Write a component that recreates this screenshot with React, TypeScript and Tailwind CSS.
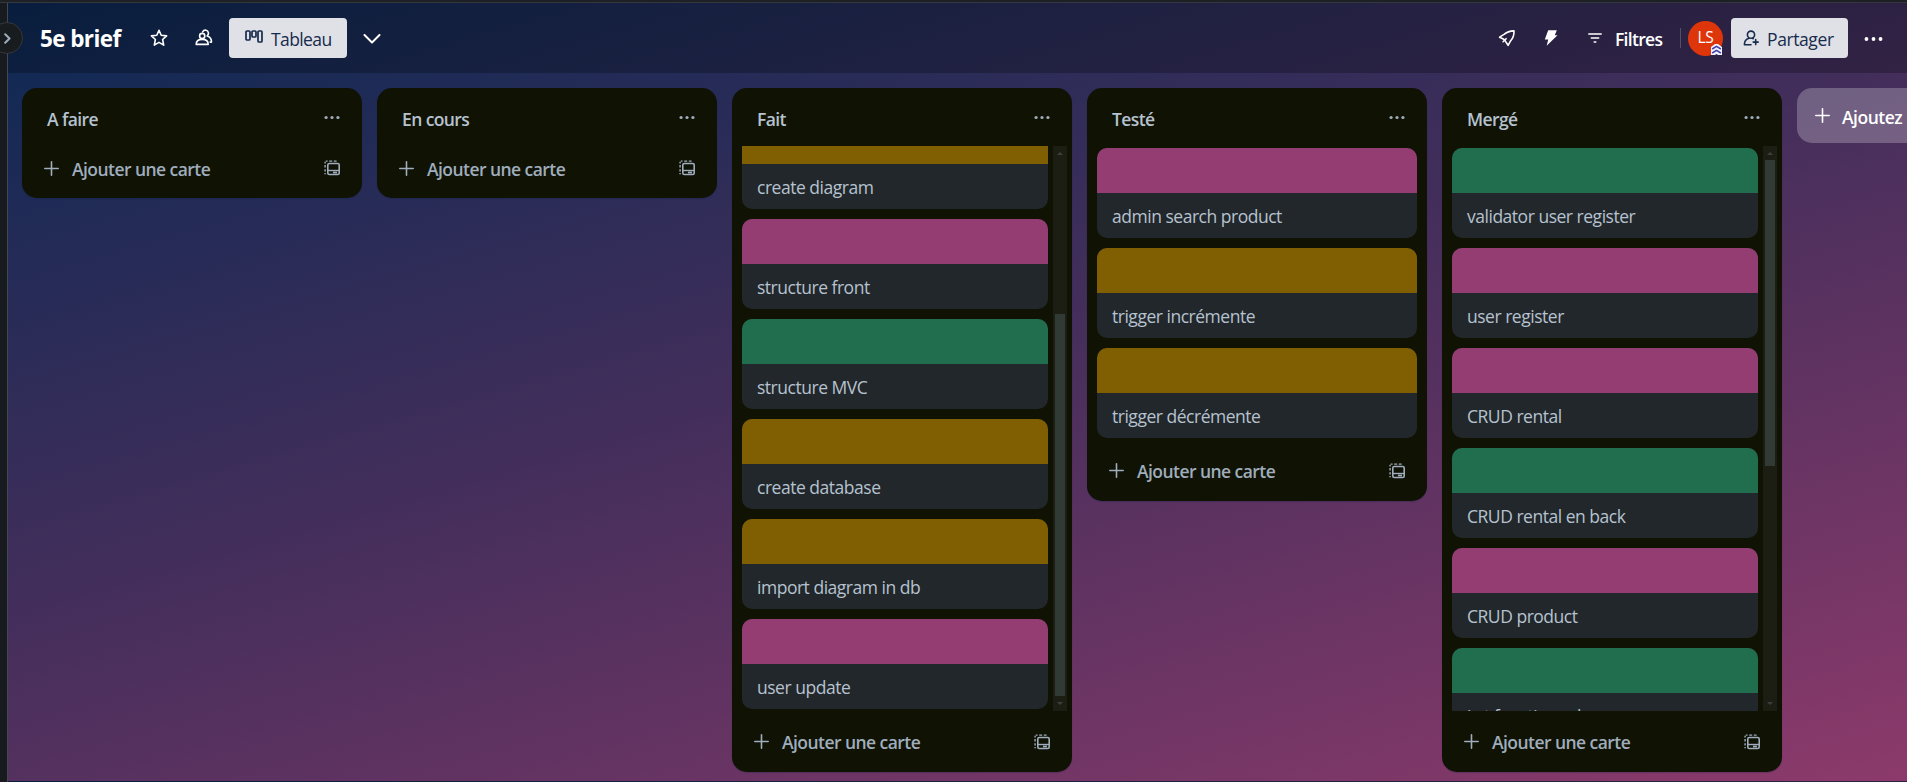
import React from "react";

type Tint = "yellow" | "pink" | "green";
type CardData = { title: string; tint: Tint };
type ListData = {
  title: string;
  cards: CardData[];
  scroll?: { offset: string; thumb: string };
};

const tints: Record<Tint, string> = {
  yellow: "bg-[#7f5f01]",
  pink: "bg-[#943d73]",
  green: "bg-[#216e4e]",
};

const lists: ListData[] = [
  { title: "A faire", cards: [] },
  { title: "En cours", cards: [] },
  {
    title: "Fait",
    scroll: { offset: "-mt-[27px]", thumb: "mt-[168px] h-[382px]" },
    cards: [
      { title: "create diagram", tint: "yellow" },
      { title: "structure front", tint: "pink" },
      { title: "structure MVC", tint: "green" },
      { title: "create database", tint: "yellow" },
      { title: "import diagram in db", tint: "yellow" },
      { title: "user update", tint: "pink" },
    ],
  },
  {
    title: "Testé",
    cards: [
      { title: "admin search product", tint: "pink" },
      { title: "trigger incrémente", tint: "yellow" },
      { title: "trigger décrémente", tint: "yellow" },
    ],
  },
  {
    title: "Mergé",
    scroll: { offset: "mt-[2px]", thumb: "mt-[14px] h-[306px]" },
    cards: [
      { title: "validator user register", tint: "green" },
      { title: "user register", tint: "pink" },
      { title: "CRUD rental", tint: "pink" },
      { title: "CRUD rental en back", tint: "green" },
      { title: "CRUD product", tint: "pink" },
      { title: "jwt fonctionnel", tint: "green" },
    ],
  },
];

function Dots({ className }: { className: string }) {
  return (
    <svg viewBox="0 0 20 6" className={className} fill="currentColor">
      <circle cx="2.6" cy="3" r="2" />
      <circle cx="10" cy="3" r="2" />
      <circle cx="17.4" cy="3" r="2" />
    </svg>
  );
}

function Plus() {
  return (
    <svg viewBox="0 0 15 15" className="size-[15px] shrink-0" fill="none" stroke="currentColor" strokeWidth="1.6" strokeLinecap="round">
      <path d="M7.5 .8v13.4M.8 7.5h13.4" />
    </svg>
  );
}

function TemplateIcon() {
  return (
    <svg viewBox="0 0 16 16" className="size-4 shrink-0" fill="none" stroke="currentColor">
      <rect x="3.8" y="3.5" width="11.400" height="11" rx="1.5" strokeWidth="1.6" />
      <path d="M4 10.5h11" strokeWidth="1.4" />
      <path d="M9 12.5h4" strokeWidth="1.8" />
      <path d="M1.8 1.1h1.8M5.200 1.1h3M9.800 1.1h2.800M1.1 1.8v1.6M1.1 5v2.6M1.1 9.2v2.4M1.1 13v1.2" strokeWidth="1.4" />
    </svg>
  );
}

function Card({ card }: { card: CardData }) {
  return (
    <li className="flex h-[90px] shrink-0 flex-col overflow-hidden rounded-[10px] bg-[#22272b]">
      <div className={`h-[45px] ${tints[card.tint]}`} />
      <div className="flex h-[45px] items-center px-[15px] pt-px text-[17.5px] tracking-[-0.48px] whitespace-nowrap">
        {card.title}
      </div>
    </li>
  );
}

function Scrollbar({ thumb }: { thumb: string }) {
  return (
    <div className="relative flex w-[14px] shrink-0 justify-center bg-[#1c1e14]">
      <div className={`w-[10px] bg-[#323a36] ${thumb}`} />
      <svg viewBox="0 0 6 3" className="absolute top-[6px] left-1 h-[3px] w-[6px]" fill="#3a413d">
        <path d="M0 3 3 0l3 3z" />
      </svg>
      <svg viewBox="0 0 6 3" className="absolute bottom-[6px] left-1 h-[3px] w-[6px]" fill="#3a413d">
        <path d="M0 0 3 3l3-3z" />
      </svg>
    </div>
  );
}

function List({ list }: { list: ListData }) {
  const cards = list.cards.map((c) => <Card key={c.title} card={c} />);
  return (
    <section className="flex w-[340px] shrink-0 flex-col rounded-[15px] bg-[#101204] text-[#b6c2cf] shadow-[0_1px_1px_#091e4240]">
      <header className="flex h-[58px] items-center justify-between pr-[22px] pl-[25px]">
        <h2 className="pt-[5px] text-[17.5px] font-semibold tracking-[-0.6px]">{list.title}</h2>
        <Dots className="mt-px h-[5px] w-4 text-[#9fadbc]" />
      </header>
      {list.scroll ? (
        <div className="flex h-[565px] overflow-hidden pr-[5px] pl-[10px]">
          <div className="h-full w-[306px] overflow-hidden">
            <ol className={`flex flex-col gap-[10px] ${list.scroll.offset}`}>{cards}</ol>
          </div>
          <div className="w-[5px] shrink-0" />
          <Scrollbar thumb={list.scroll.thumb} />
        </div>
      ) : cards.length > 0 ? (
        <ol className="flex flex-col gap-[10px] px-[10px] py-[2px]">{cards}</ol>
      ) : null}
      <footer className={`flex h-[52px] items-center gap-5 pr-[22px] pl-[22px] text-[#9fadbc] ${cards.length ? "mt-[9px] pb-[9px]" : "mt-0 pb-[8px]"}`}>
        <div className="flex grow items-center gap-[13px]">
          <Plus />
          <span className="pt-[2px] text-[17.5px] font-semibold tracking-[-0.55px]">Ajouter une carte</span>
        </div>
        <TemplateIcon />
      </footer>
    </section>
  );
}

function TopBar() {
  return (
    <header className="flex h-[70px] shrink-0 items-center bg-black/25 pr-[24px] pl-[32px] text-white">
      <h1 className="w-[110px] pt-px text-[22.5px] font-bold tracking-[-0.6px] whitespace-nowrap">5e brief</h1>
      <svg viewBox="0 0 18 18" className="size-[18px]" fill="none" stroke="currentColor" strokeWidth="1.6" strokeLinejoin="round">
        <path d="M9 1.3l2.2 5 5.4.6-4 3.6 1.1 5.6L9 13.4l-4.7 2.7 1.1-5.6-4-3.6 5.4-.6z" />
      </svg>
      <svg viewBox="0 0 18 18" className="ml-[27px] h-[18px] w-[18px]" fill="none" stroke="currentColor" strokeWidth="1.6" strokeLinejoin="round" strokeLinecap="round">
        <circle cx="7.2" cy="7" r="2.6" />
        <path d="M1.2 15.4c0-3.3 2.3-5 6-5s6 1.7 6 5z" />
        <path d="M7.6 2.8c.8-1.3 2.1-1.9 3.4-1.6 2.6.6 3.3 3.9 1.2 5.7 2.6.8 4.4 3 4.3 6.2h-1.3" />
      </svg>
      <button className="ml-[16px] flex h-10 w-[118px] items-center gap-[8px] rounded-[4px] bg-[#dfe1e6] pl-4 text-[#172b4d]">
        <svg viewBox="0 0 18 14" className="mb-[5px] h-[14px] w-[18px]" fill="none" stroke="currentColor" strokeWidth="1.7">
          <rect x="1" y="2" width="4" height="9" rx="1" />
          <rect x="7" y="2" width="4" height="6" rx="1" />
          <rect x="13" y="2" width="4" height="11" rx="1" />
        </svg>
        <span className="pt-[2px] text-[17.5px] tracking-[-0.6px]">Tableau</span>
      </button>
      <svg viewBox="0 0 18 10" className="mt-[2px] ml-4 h-[10px] w-[18px]" fill="none" stroke="currentColor" strokeWidth="2" strokeLinecap="round" strokeLinejoin="round">
        <path d="M1.5 1l7.5 7.5L16.5 1" />
      </svg>
      <div className="grow" />
      <svg viewBox="0 0 18 18" className="size-[18px]" fill="none" stroke="currentColor" strokeWidth="1.6" strokeLinejoin="round" strokeLinecap="round">
        <path d="M16 1.9C11.5 2 8.3 3.3 6 5.4L1.6 8.2 5.8 10.3 7.3 12.1 10.1 16.3 12.7 11.7C15 9.2 16.1 5.7 16 1.9z" />
        <path d="M5.1 12.7l3-3" />
      </svg>
      <svg viewBox="0 0 14 18" className="ml-[28px] h-[18px] w-[14px]" fill="currentColor">
        <path d="M4.2 1.3h8.600l-2 5h2.700L2.700 16.800l1.500-6.300H.8z" />
      </svg>
      <svg viewBox="0 0 14 10" className="mb-px ml-[30px] h-[10px] w-[14px]" fill="none" stroke="currentColor" strokeWidth="1.5" strokeLinecap="round">
        <path d="M.8 1h12.4M3.3 5h7.4M6.2 9h1.6" />
      </svg>
      <span className="ml-[13px] w-[47px] pt-[2px] text-[17.5px] font-semibold tracking-[-0.7px]">Filtres</span>
      <div className="ml-[18px] h-5 w-px bg-white/20" />
      <div className="relative ml-[7px] flex size-[35px] items-center justify-center rounded-full bg-[#de350b] text-[15.5px] font-medium tracking-[-0.3px]">
        LS
        <svg viewBox="0 0 11 11" className="absolute right-[1px] bottom-[1px] size-[11px]" fill="none">
          <path d="M0 3 4 0h3l4 3v8H7L5.5 10 4 11H0z" fill="#f1f2fb" />
          <path d="M1.2 5l4.3-2.6L9.800 5M1.2 9l4.3-2.6L9.800 9" stroke="#403fb0" strokeWidth="1.5" />
        </svg>
      </div>
      <button className="ml-2 flex h-10 w-[117px] items-center gap-[7px] rounded-[4px] bg-[#dfe1e6] pl-3 text-[#172b4d]">
        <svg viewBox="0 0 17 16" className="h-4 w-[17px]" fill="none" stroke="currentColor" strokeWidth="1.6" strokeLinecap="round" strokeLinejoin="round">
          <circle cx="8" cy="4.7" r="3.6" />
          <path d="M6 8.2C3 9 1.4 11.5 1.4 14.7H8M9.5 8.2l.8.5M12.7 9.6v5M10.2 12.1h5" />
        </svg>
        <span className="pt-[3px] text-[17.5px] font-medium tracking-[-0.4px]">Partager</span>
      </button>
      <Dots className="mt-px ml-4 h-[6px] w-[19px]" />
    </header>
  );
}

export default function App() {
  return (
    <div className="flex h-[782px] w-full flex-col overflow-hidden bg-[#1d2125] font-['Open_Sans','Noto_Sans',sans-serif]">
      <div className="h-[3px] shrink-0 border-b border-[#34383c] bg-[#1d2125]" />
      <div className="flex min-h-0 grow">
        <aside className="relative w-[8px] shrink-0 border-r border-white/20 bg-[#171b1f]">
          <div className="absolute top-[19px] -left-[9px] z-10 flex size-8 items-center justify-center rounded-full border border-[#34373b] bg-[#191c1f] text-[#9fadbc]">
            <svg viewBox="0 0 7 11" className="h-[11px] w-[7px]" fill="none" stroke="currentColor" strokeWidth="2" strokeLinecap="round" strokeLinejoin="round">
              <path d="M1.2 1.2l4.3 4.3-4.3 4.3" />
            </svg>
          </div>
        </aside>
        <main className="flex min-w-0 grow flex-col overflow-hidden border-b border-black/25 bg-[linear-gradient(164deg,#0c2953_0%,#432e5b_46%,#8c3a6b_100%)]">
          <TopBar />
          <div className="flex items-start gap-[15px] pt-[15px] pl-[14px]">
            {lists.map((l) => (
              <List key={l.title} list={l} />
            ))}
            <button className="flex h-[55px] w-[340px] shrink-0 items-center gap-[12px] rounded-[15px] bg-white/24 pl-[18px] text-[17.5px] font-semibold tracking-[-0.5px] text-white [word-spacing:4px]">
              <Plus />
              <span className="pt-[3px] whitespace-nowrap">Ajoutez une autre liste</span>
            </button>
          </div>
        </main>
      </div>
    </div>
  );
}
